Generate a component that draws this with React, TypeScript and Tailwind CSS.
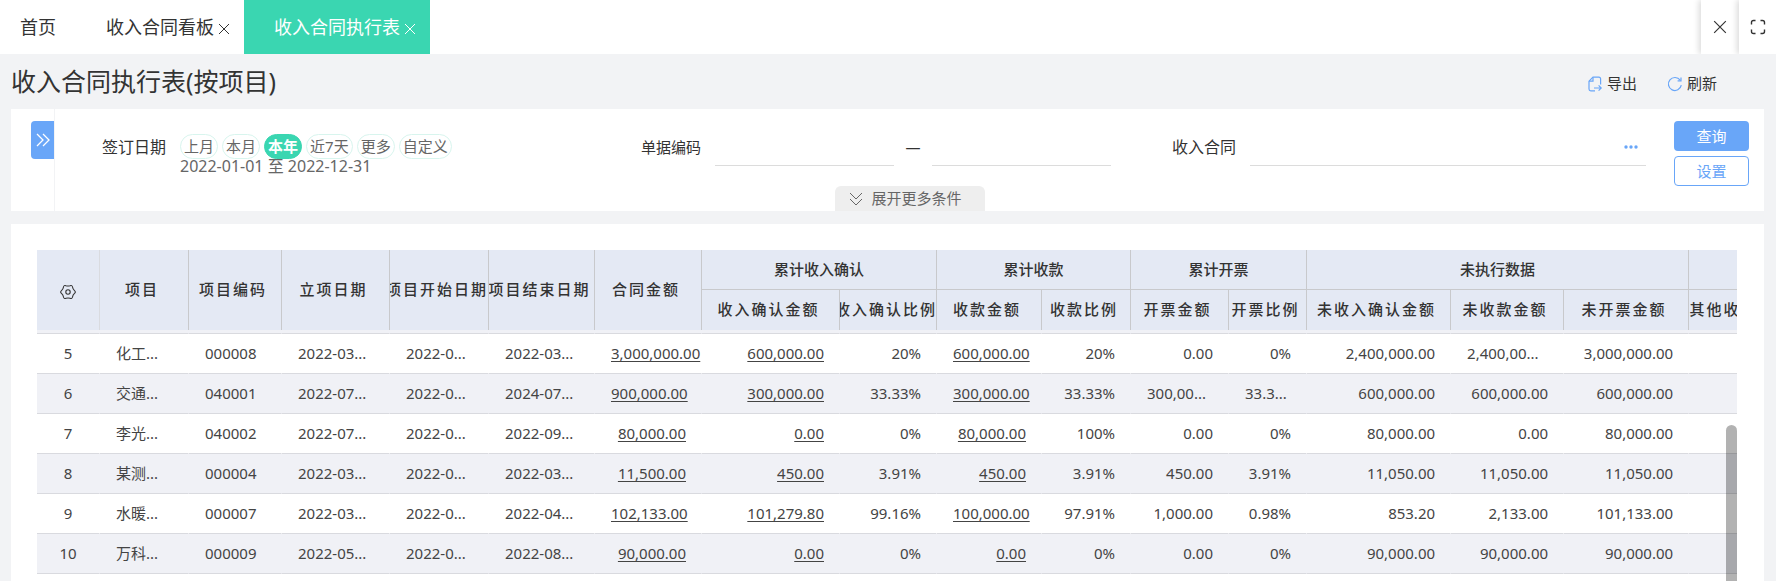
import React, { useState } from 'react';
import { clsx } from 'clsx';

type Column = {
  title: string;
  width: number;
  align: 'left' | 'right';
  link?: boolean;
};

const baseColumns: Column[] = [
  { title: '项目', width: 89, align: 'left' },
  { title: '项目编码', width: 93, align: 'left' },
  { title: '立项日期', width: 108, align: 'left' },
  { title: '项目开始日期', width: 99, align: 'left' },
  { title: '项目结束日期', width: 106, align: 'left' },
  { title: '合同金额', width: 107, align: 'right', link: true },
];

const groups: { title: string; columns: Column[] }[] = [
  {
    title: '累计收入确认',
    columns: [
      { title: '收入确认金额', width: 138, align: 'right', link: true },
      { title: '收入确认比例', width: 97, align: 'right' },
    ],
  },
  {
    title: '累计收款',
    columns: [
      { title: '收款金额', width: 105, align: 'right', link: true },
      { title: '收款比例', width: 89, align: 'right' },
    ],
  },
  {
    title: '累计开票',
    columns: [
      { title: '开票金额', width: 98, align: 'right' },
      { title: '开票比例', width: 78, align: 'right' },
    ],
  },
  {
    title: '未执行数据',
    columns: [
      { title: '未收入确认金额', width: 144, align: 'right' },
      { title: '未收款金额', width: 113, align: 'right' },
      { title: '未开票金额', width: 125, align: 'right' },
    ],
  },
  {
    title: '',
    columns: [{ title: '其他收入金额', width: 108, align: 'right' }],
  },
];

const groupColumns = groups.flatMap((g) => g.columns);
const columns = [...baseColumns, ...groupColumns];

const rows: { no: number; cells: string[] }[] = [
  { no: 5, cells: ['化工...', '000008', '2022-03...', '2022-0...', '2022-03...', '3,000,000.00', '600,000.00', '20%', '600,000.00', '20%', '0.00', '0%', '2,400,000.00', '2,400,00...', '3,000,000.00', ''] },
  { no: 6, cells: ['交通...', '040001', '2022-07...', '2022-0...', '2024-07...', '900,000.00', '300,000.00', '33.33%', '300,000.00', '33.33%', '300,00...', '33.3...', '600,000.00', '600,000.00', '600,000.00', ''] },
  { no: 7, cells: ['李光...', '040002', '2022-07...', '2022-0...', '2022-09...', '80,000.00', '0.00', '0%', '80,000.00', '100%', '0.00', '0%', '80,000.00', '0.00', '80,000.00', ''] },
  { no: 8, cells: ['某测...', '000004', '2022-03...', '2022-0...', '2022-03...', '11,500.00', '450.00', '3.91%', '450.00', '3.91%', '450.00', '3.91%', '11,050.00', '11,050.00', '11,050.00', ''] },
  { no: 9, cells: ['水暖...', '000007', '2022-03...', '2022-0...', '2022-04...', '102,133.00', '101,279.80', '99.16%', '100,000.00', '97.91%', '1,000.00', '0.98%', '853.20', '2,133.00', '101,133.00', ''] },
  { no: 10, cells: ['万科...', '000009', '2022-05...', '2022-0...', '2022-08...', '90,000.00', '0.00', '0%', '0.00', '0%', '0.00', '0%', '90,000.00', '90,000.00', '90,000.00', ''] },
];

const ranges = ['上月', '本月', '本年', '近7天', '更多', '自定义'];

const CrossIcon = ({ className }: { className?: string }) => (
  <svg viewBox="0 0 12 12" fill="none" stroke="currentColor" className={className} aria-hidden="true">
    <path d="M1 1l10 10M11 1L1 11" />
  </svg>
);

const FullscreenIcon = () => (
  <svg viewBox="0 0 16 16" fill="none" stroke="currentColor" strokeWidth="1.4" className="w-4 h-4" aria-hidden="true">
    <path d="M1.5 5.5v-2q0-2 2-2h2M10.5 1.5h2q2 0 2 2v2M14.5 10.5v2q0 2-2 2h-2M5.5 14.5h-2q-2 0-2-2v-2" />
  </svg>
);

const ExportIcon = () => (
  <svg viewBox="0 0 16 16" fill="none" stroke="currentColor" strokeWidth="1.2" className="w-4 h-4" aria-hidden="true">
    <path d="M13.6 8.500V3q0-1.800-1.800-1.800H6L2 5.200V13q0 1.800 1.800 1.800H8" />
    <path d="M6 1.2v4H2M7 12h7M11.600 9.400l2.600 2.600-2.600 2.600" />
  </svg>
);

const RefreshIcon = () => (
  <svg viewBox="0 0 16 16" fill="none" stroke="currentColor" strokeWidth="1.2" className="w-4 h-4" aria-hidden="true">
    <path d="M14.3 9.2A6.5 6.5 0 1 1 13.2 4.2" />
    <path d="M14 1.6v3.3h-3.4" />
  </svg>
);

const GearIcon = () => (
  <svg viewBox="0 0 16 16" fill="none" stroke="currentColor" strokeWidth="1.1" className="w-4 h-4" aria-hidden="true">
    <path d="M10 1.7Q12.1.9 12.5 3 12.85 5.2 14.5 6.6 16.2 8 14.5 9.4 12.85 10.8 12.5 13 12.1 15.1 10 14.3 8 13.6 6 14.3 3.9 15.1 3.5 13 3.15 10.8 1.5 9.4-.2 8 1.5 6.6 3.15 5.2 3.5 3 3.9.9 6 1.7 8 2.4 10 1.7z" />
    <circle cx="8" cy="8" r="2.2" />
  </svg>
);

const HeadText = ({ children }: { children: React.ReactNode }) => (
  <div className="flex justify-center overflow-hidden pr-1 whitespace-nowrap tracking-[2px]">
    <span className="shrink-0">{children}</span>
  </div>
);

const TabBar = () => (
  <header className="flex h-[54px] shrink-0 overflow-hidden bg-white text-lg text-[#333]">
    <nav className="flex flex-1">
      <a href="#home" className="flex items-center px-5">首页</a>
      <div className="flex items-center gap-1 pl-[30px] pr-[14px]">
        <a href="#board">收入合同看板</a>
        <button type="button" aria-label="关闭收入合同看板" className="pt-1">
          <CrossIcon className="w-3 h-3" />
        </button>
      </div>
      <div className="flex items-center gap-1 pl-[30px] pr-[14px] bg-[#3ad6b1] text-white">
        <a href="#report">收入合同执行表</a>
        <button type="button" aria-label="关闭收入合同执行表" className="pt-1">
          <CrossIcon className="w-3 h-3" />
        </button>
      </div>
    </nav>
    <button type="button" aria-label="关闭" className="flex w-[38px] items-center justify-center bg-white shadow-[-2px_0_6px_rgba(0,0,0,0.15)]">
      <CrossIcon className="w-[14px] h-[14px]" />
    </button>
    <button type="button" aria-label="全屏" className="flex w-[37px] items-center justify-center bg-white shadow-[-2px_0_6px_rgba(0,0,0,0.15)]">
      <FullscreenIcon />
    </button>
  </header>
);

const FilterPanel = () => {
  const [range, setRange] = useState('本年');

  return (
    <section className="flex shrink-0 bg-white text-[15px] text-[#333]">
      <div className="flex w-11 items-start justify-end border-r border-[#f2f3f5] pt-3">
        <button type="button" aria-label="展开侧栏" className="flex h-[38px] w-[23px] items-center justify-center rounded-l bg-[#69a6f8] text-white">
          <svg viewBox="0 0 14 14" fill="none" stroke="currentColor" strokeWidth="1.3" className="w-[14px] h-[14px]" aria-hidden="true">
            <path d="M1 1l6 6-6 6M7 1l6 6-6 6" />
          </svg>
        </button>
      </div>

      <div className="flex flex-1 flex-col">
        <div className="flex pr-[15px]">
          <div className="grid flex-1 grid-cols-3 pt-5">
            {/* Sign date */}
            <div className="flex gap-[14px]">
              <span className="w-[111px] shrink-0 text-right text-base leading-9">签订日期</span>
              <div className="pt-[5px]">
                <div className="flex gap-1">
                  {ranges.map((r) => (
                    <button
                      key={r}
                      type="button"
                      onClick={() => setRange(r)}
                      className={clsx(
                        'h-[25px] rounded-full border px-[3px] leading-[23px] whitespace-nowrap',
                        r === range
                          ? 'border-[#3ad6b1] bg-[#3ad6b1] font-bold text-white'
                          : 'border-[#d8f5ee] text-[#666]'
                      )}
                    >
                      {r}
                    </button>
                  ))}
                </div>
                <div className="text-base leading-[14px] whitespace-nowrap text-[#666]">2022-01-01 至 2022-12-31</div>
              </div>
            </div>

            {/* Document code */}
            <div className="flex gap-[14px] pr-[14px]">
              <label htmlFor="code-from" className="w-[111px] shrink-0 text-right leading-9">单据编码</label>
              <div className="flex h-[37px] min-w-0 flex-1">
                <input id="code-from" className="w-0 flex-1 border-b border-[#dcdcdc] outline-none" />
                <span className="w-[38px] shrink-0 text-center leading-9">—</span>
                <input aria-label="单据编码至" className="w-0 flex-1 border-b border-[#dcdcdc] outline-none" />
              </div>
            </div>

            {/* Income contract */}
            <div className="flex gap-[14px] pr-[14px]">
              <label htmlFor="contract" className="w-[111px] shrink-0 text-right text-base leading-9">收入合同</label>
              <div className="flex h-[37px] min-w-0 flex-1 border-b border-[#dcdcdc] pr-2">
                <input id="contract" className="w-0 flex-1 outline-none" />
                <button type="button" aria-label="选择收入合同" className="text-[#69a6f8]">
                  <svg viewBox="0 0 14 4" fill="currentColor" className="h-1 w-[14px]" aria-hidden="true">
                    <circle cx="2" cy="2" r="1.7" />
                    <circle cx="7" cy="2" r="1.7" />
                    <circle cx="12" cy="2" r="1.7" />
                  </svg>
                </button>
              </div>
            </div>
          </div>

          <div className="ml-[14px] flex w-[75px] shrink-0 flex-col gap-[5px] pt-3">
            <button type="button" className="h-[30px] rounded bg-[#69a6f8] text-white">查询</button>
            <button type="button" className="h-[30px] rounded border border-[#69a6f8] text-[#69a6f8]">设置</button>
          </div>
        </div>

        <button type="button" className="flex h-[25px] w-[150px] items-center justify-center gap-2 self-center rounded-t-md bg-[#eee] pr-2 text-[#666]">
          <svg viewBox="0 0 14 14" fill="none" stroke="currentColor" className="w-[14px] h-[14px]" aria-hidden="true">
            <path d="M1 1l6 6 6-6M1 7l6 6 6-6" />
          </svg>
          展开更多条件
        </button>
      </div>
    </section>
  );
};

const ReportTable = () => (
  <div className="relative min-h-0 flex-1 overflow-hidden">
    <table className="w-[1760px] table-fixed border-separate border-spacing-0 text-[15px] text-[#444]">
      <colgroup>
        <col className="w-[63px]" />
        {columns.map((c) => (
          <col key={c.title} style={{ width: c.width }} />
        ))}
      </colgroup>
      <thead className="bg-[#e4e9f4] text-[#333]">
        <tr className="h-10">
          <th rowSpan={2} className="border-r border-[#d9dbe0] p-0">
            <button type="button" aria-label="列设置" className="align-middle">
              <GearIcon />
            </button>
          </th>
          {baseColumns.map((c) => (
            <th key={c.title} rowSpan={2} className="border-r border-[#c8c9cc] p-0 pb-[2px] font-medium">
              <HeadText>{c.title}</HeadText>
            </th>
          ))}
          {groups.map((g) => (
            <th key={g.title} colSpan={g.columns.length} className="border-r border-b border-[#c8c9cc] p-0 font-medium">
              {g.title}
            </th>
          ))}
        </tr>
        <tr className="h-10">
          {groupColumns.map((c) => (
            <th key={c.title} className="border-r border-[#c8c9cc] p-0 pb-[2px] font-medium">
              <HeadText>{c.title}</HeadText>
            </th>
          ))}
        </tr>
      </thead>
      <tbody>
        {/* edge of the row scrolled under the header */}
        <tr className="h-1 bg-[#f0f1f6]" aria-hidden="true">
          <td className="border-r border-b border-r-transparent border-b-[#d9dadf] p-0" />
          {columns.map((c) => (
            <td key={c.title} className="border-r border-b border-r-transparent border-b-[#d9dadf] p-0" />
          ))}
        </tr>
        {rows.map((row) => (
          <tr key={row.no} className="h-10 even:bg-white odd:bg-[#f0f1f6]">
            <td className="border-r border-b border-r-transparent border-b-[#d9dadf] p-0 text-center">{row.no}</td>
            {row.cells.map((text, i) => (
              <td
                key={columns[i].title}
                className={clsx(
                  'border-r border-b border-r-transparent border-b-[#d9dadf] py-0 pr-[15px] pl-4 whitespace-nowrap',
                  columns[i].align === 'right' && !text.endsWith('...') ? 'text-right' : 'text-left'
                )}
              >
                {columns[i].link ? (
                  <a href="#detail" className="underline underline-offset-2">{text}</a>
                ) : (
                  text
                )}
              </td>
            ))}
          </tr>
        ))}
      </tbody>
    </table>

    {/* Scrollbar thumb */}
    <div className="absolute top-[175px] right-0 bottom-0 w-[11px] rounded-t-full bg-black/30" />
  </div>
);

export default function App() {
  return (
    <div className="flex h-screen flex-col overflow-hidden bg-[#f2f3f5] font-['Noto_Sans','Noto_Sans_CJK_SC',sans-serif]">
      <TabBar />

      <main className="flex min-h-0 flex-1 flex-col pr-3 pl-[11px]">
        <div className="flex h-[55px] shrink-0 items-center justify-between pr-[47px] text-[#333]">
          <h1 className="text-[25px]">收入合同执行表(按项目)</h1>
          <div className="flex gap-[30px] pt-1 text-[15px]">
            <button type="button" className="flex items-center gap-1">
              <span className="text-[#69a6f8]"><ExportIcon /></span>
              导出
            </button>
            <button type="button" className="flex items-center gap-1">
              <span className="text-[#69a6f8]"><RefreshIcon /></span>
              刷新
            </button>
          </div>
        </div>

        <FilterPanel />

        <section className="mt-[13px] flex min-h-0 flex-1 flex-col bg-white pt-[26px] pr-[27px] pl-[26px]">
          <ReportTable />
        </section>
      </main>
    </div>
  );
}
